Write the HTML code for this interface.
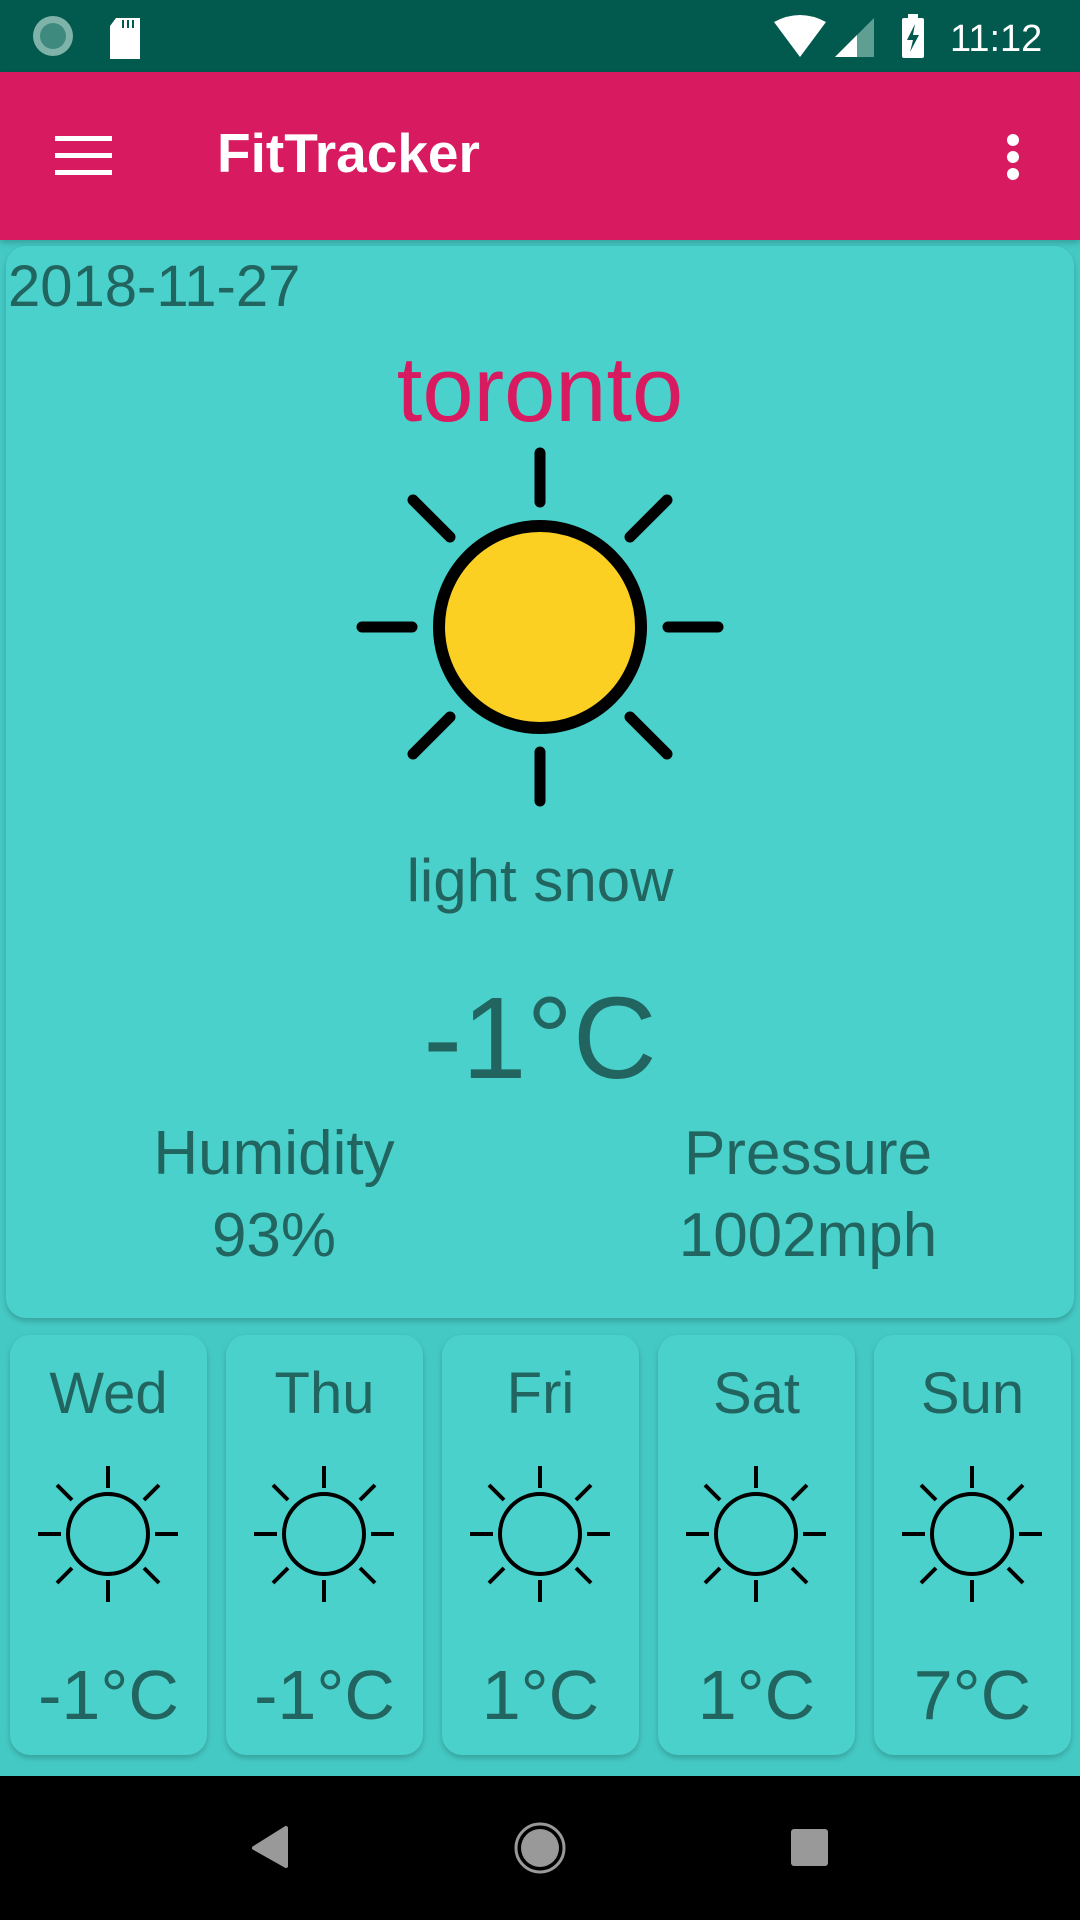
<!DOCTYPE html>
<html><head><meta charset="utf-8"><style>
*{margin:0;padding:0;box-sizing:border-box}
body{width:1080px;height:1920px;overflow:hidden;background:#45c9c4;font-family:"Liberation Sans",sans-serif;position:relative}
.abs{position:absolute}
.t{color:#22645f;white-space:nowrap}
.card{position:absolute;background:#4ad1cb;border-radius:20px;box-shadow:0 3px 6px rgba(0,0,0,0.2)}
</style></head><body>
<div class="abs" style="left:0;top:0;width:1080px;height:72px;background:#02594e"></div>
<svg class="abs" style="left:0;top:0" width="1080" height="72">
<circle cx="53" cy="36" r="20" fill="#7fb3aa"/><circle cx="53" cy="36" r="13" fill="#3f8a7e"/>
<path d="M116 18h24v41h-30v-33z" fill="#fff"/><rect x="122" y="20" width="2" height="8" fill="#02594e"/><rect x="127" y="20" width="2" height="8" fill="#02594e"/><rect x="132" y="20" width="2" height="8" fill="#02594e"/>
<path d="M774 22 Q800 8 826 22 L800 57z" fill="#fff"/>
<path d="M835 57 L874 18 V57z" fill="#5f9f93"/><path d="M835 57 L857 35 V57z" fill="#fff"/>
<rect x="902" y="18" width="22" height="40" rx="2" fill="#fff"/><rect x="908" y="14" width="10" height="5" fill="#fff"/>
<path d="M915 24 l-8 16h6l-3 12 9-17h-6z" fill="#02594e"/>
<text x="950" y="51" font-size="38" fill="#fff" font-family="Liberation Sans">11:12</text>
</svg>
<div class="abs" style="left:0;top:72px;width:1080px;height:168px;background:#d81b60;box-shadow:0 3px 6px rgba(0,0,0,0.2)"></div>
<div class="abs" style="left:55px;top:136px;width:57px;height:5px;background:#fff"></div>
<div class="abs" style="left:55px;top:153px;width:57px;height:5px;background:#fff"></div>
<div class="abs" style="left:55px;top:170px;width:57px;height:5px;background:#fff"></div>
<div class="abs" style="left:217px;top:126px;color:#fff;font-size:55px;font-weight:bold;line-height:1">FitTracker</div>
<div class="abs" style="left:1007px;top:134px;width:12px;height:12px;border-radius:6px;background:#fff"></div>
<div class="abs" style="left:1007px;top:151px;width:12px;height:12px;border-radius:6px;background:#fff"></div>
<div class="abs" style="left:1007px;top:168px;width:12px;height:12px;border-radius:6px;background:#fff"></div>

<div class="card" style="left:6px;top:246px;width:1068px;height:1072px"></div>
<div class="abs t" style="left:8px;top:258px;font-size:58px;line-height:1">2018-11-27</div>
<div class="abs" style="left:0;width:1080px;top:344px;text-align:center;color:#d81b60;font-size:92px;line-height:1">toronto</div>
<svg class="abs" style="left:340px;top:427px" width="400" height="400" viewBox="340 427 400 400">
<g stroke="#000" stroke-width="11" stroke-linecap="round">
<line x1="540" y1="453" x2="540" y2="502"/><line x1="540" y1="752" x2="540" y2="801"/>
<line x1="362" y1="627" x2="412" y2="627"/><line x1="668" y1="627" x2="718" y2="627"/>
<line x1="413" y1="500" x2="450" y2="537"/><line x1="667" y1="500" x2="630" y2="537"/>
<line x1="413" y1="754" x2="450" y2="717"/><line x1="667" y1="754" x2="630" y2="717"/>
</g>
<circle cx="540" cy="627" r="101" fill="#fcd022" stroke="#000" stroke-width="12"/>
</svg>
<div class="abs t" style="left:0;width:1080px;top:851px;text-align:center;font-size:60px;line-height:1">light snow</div>
<div class="abs t" style="left:0;width:1080px;top:980px;text-align:center;font-size:116px;line-height:1">-1°C</div>
<div class="abs t" style="left:74px;width:400px;top:1123px;text-align:center;font-size:62px;line-height:1">Humidity</div>
<div class="abs t" style="left:74px;width:400px;top:1205px;text-align:center;font-size:62px;line-height:1">93%</div>
<div class="abs t" style="left:608px;width:400px;top:1123px;text-align:center;font-size:62px;line-height:1">Pressure</div>
<div class="abs t" style="left:608px;width:400px;top:1205px;text-align:center;font-size:62px;line-height:1">1002mph</div>

<div class="card" style="left:10px;top:1335px;width:197px;height:420px"></div>
<div class="card" style="left:226px;top:1335px;width:197px;height:420px"></div>
<div class="card" style="left:442px;top:1335px;width:197px;height:420px"></div>
<div class="card" style="left:658px;top:1335px;width:197px;height:420px"></div>
<div class="card" style="left:874px;top:1335px;width:197px;height:420px"></div>
<svg class="abs" style="left:0;top:1320px" width="1080" height="456">
<defs><g id="s" stroke="#000" stroke-width="4" fill="none">
<circle cx="0" cy="0" r="40"/>
<line x1="0" y1="-46" x2="0" y2="-68"/><line x1="0" y1="46" x2="0" y2="68"/>
<line x1="-47" y1="0" x2="-70" y2="0"/><line x1="47" y1="0" x2="70" y2="0"/>
<line x1="-36" y1="-34" x2="-51" y2="-49"/><line x1="36" y1="-34" x2="51" y2="-49"/>
<line x1="-36" y1="34" x2="-51" y2="49"/><line x1="36" y1="34" x2="51" y2="49"/>
</g></defs>
<use href="#s" x="108" y="214"/><use href="#s" x="324" y="214"/><use href="#s" x="540" y="214"/><use href="#s" x="756" y="214"/><use href="#s" x="972" y="214"/>
</svg>
<div class="abs t" style="left:10px;width:197px;top:1365px;text-align:center;font-size:58px;line-height:1">Wed</div>
<div class="abs t" style="left:226px;width:197px;top:1365px;text-align:center;font-size:58px;line-height:1">Thu</div>
<div class="abs t" style="left:442px;width:197px;top:1365px;text-align:center;font-size:58px;line-height:1">Fri</div>
<div class="abs t" style="left:658px;width:197px;top:1365px;text-align:center;font-size:58px;line-height:1">Sat</div>
<div class="abs t" style="left:874px;width:197px;top:1365px;text-align:center;font-size:58px;line-height:1">Sun</div>
<div class="abs t" style="left:10px;width:197px;top:1660px;text-align:center;font-size:70px;line-height:1">-1°C</div>
<div class="abs t" style="left:226px;width:197px;top:1660px;text-align:center;font-size:70px;line-height:1">-1°C</div>
<div class="abs t" style="left:442px;width:197px;top:1660px;text-align:center;font-size:70px;line-height:1">1°C</div>
<div class="abs t" style="left:658px;width:197px;top:1660px;text-align:center;font-size:70px;line-height:1">1°C</div>
<div class="abs t" style="left:874px;width:197px;top:1660px;text-align:center;font-size:70px;line-height:1">7°C</div>

<div class="abs" style="left:0;top:1776px;width:1080px;height:144px;background:#000"></div>
<svg class="abs" style="left:0;top:1776px" width="1080" height="144">
<path d="M286 52 L286 90 L254 72 Z" fill="#999" stroke="#999" stroke-width="4" stroke-linejoin="round"/>
<circle cx="540" cy="72" r="24" fill="none" stroke="#999" stroke-width="3"/><circle cx="540" cy="72" r="19" fill="#999"/>
<rect x="791" y="53" width="37" height="37" rx="3" fill="#999"/>
</svg>
</body></html>
